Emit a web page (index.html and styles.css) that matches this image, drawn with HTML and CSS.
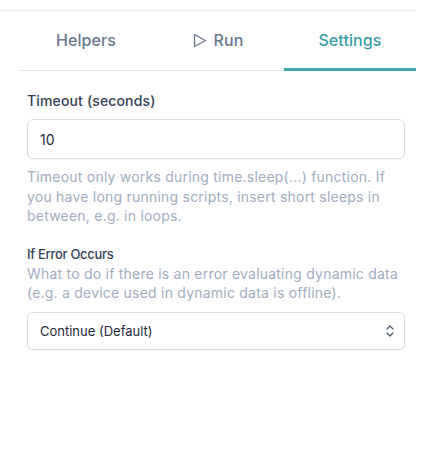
FILE: index.html
```html
<!DOCTYPE html>
<html>
<head>
<meta charset="utf-8">
<link rel="stylesheet" href="styles.css">
</head>
<body>
<div class="panel">
  <div class="tabs">
    <div class="tab">Helpers</div>
    <div class="tab"><svg class="play" width="14" height="15" viewBox="0 0 14 15"><path d="M1.5 1.5 L12.5 7.5 L1.5 13.5 Z" fill="none" stroke="currentColor" stroke-width="1.3" stroke-linejoin="round"/></svg>Run</div>
    <div class="tab active">Settings</div>
  </div>
  <div class="content">
    <div class="field">
      <div class="label">Timeout (seconds)</div>
      <div class="input">10</div>
      <div class="help">Timeout only works during time.sleep(...) function. If you have long running scripts, insert short sleeps in between, e.g. in loops.</div>
    </div>
    <div class="field second">
      <div class="label small">If Error Occurs</div>
      <div class="help tight">What to do if there is an error evaluating dynamic data (e.g. a device used in dynamic data is offline).</div>
      <div class="select">Continue (Default)<svg class="chev" width="10" height="14" viewBox="0 0 10 14"><path d="M2 5 L5 2 L8 5 M2 9 L5 12 L8 9" fill="none" stroke="#475569" stroke-width="1.2" stroke-linecap="round" stroke-linejoin="round"/></svg></div>
    </div>
  </div>
</div>
</body>
</html>
```
FILE: styles.css
```css
* { box-sizing: border-box; }
body {
  margin: 0;
  background: #fff;
  font-family: Inter, "Noto Sans", sans-serif;
}
.panel {
  width: 416px;
  margin-top: 10px;
  border-top: 1px solid #e6eaf1;
}
.tabs {
  display: flex;
  margin-left: 20px;
  border-bottom: 1px solid #e3e8ef;
  height: 60px;
}
.tab {
  flex: 1;
  display: flex;
  align-items: center;
  justify-content: center;
  gap: 7px;
  font-size: 16px;
  font-weight: 500;
  letter-spacing: 0.1px;
  color: #67768c;
  margin-bottom: -1px;
  border-bottom: 2px solid transparent;
}
.tab.active {
  color: #3a9da6;
  border-bottom: 3px solid #3aa8ae;
  padding-top: 1px;
}
.play { color: #67768c; }
.content {
  padding: 20px 11px 0 27px;
}
.label {
  font-size: 14px;
  font-weight: 500;
  line-height: 20px;
  letter-spacing: 0.15px;
  color: #334155;
}
.label.small { font-size: 13px; letter-spacing: -0.3px; }
.input {
  margin-top: 8px;
  height: 40px;
  border: 1px solid #d6dce6;
  border-radius: 6px;
  box-shadow: 0 1px 2px rgba(15, 23, 42, 0.05);
  padding: 0 12px;
  display: flex;
  align-items: center;
  font-size: 14px;
  color: #1e293b;
}
.help {
  margin-top: 8px;
  font-size: 14px;
  line-height: 19.5px;
  letter-spacing: 0.22px;
  color: #a1adbf;
}
.help.tight { margin-top: 0; }
.second { margin-top: 18px; }
.select {
  margin-top: 9px;
  height: 38px;
  border: 1px solid #d6dce6;
  border-radius: 6px;
  box-shadow: 0 1px 2px rgba(15, 23, 42, 0.05);
  padding: 0 9px 0 12px;
  display: flex;
  align-items: center;
  justify-content: space-between;
  font-size: 13px;
  color: #1e293b;
}
```
